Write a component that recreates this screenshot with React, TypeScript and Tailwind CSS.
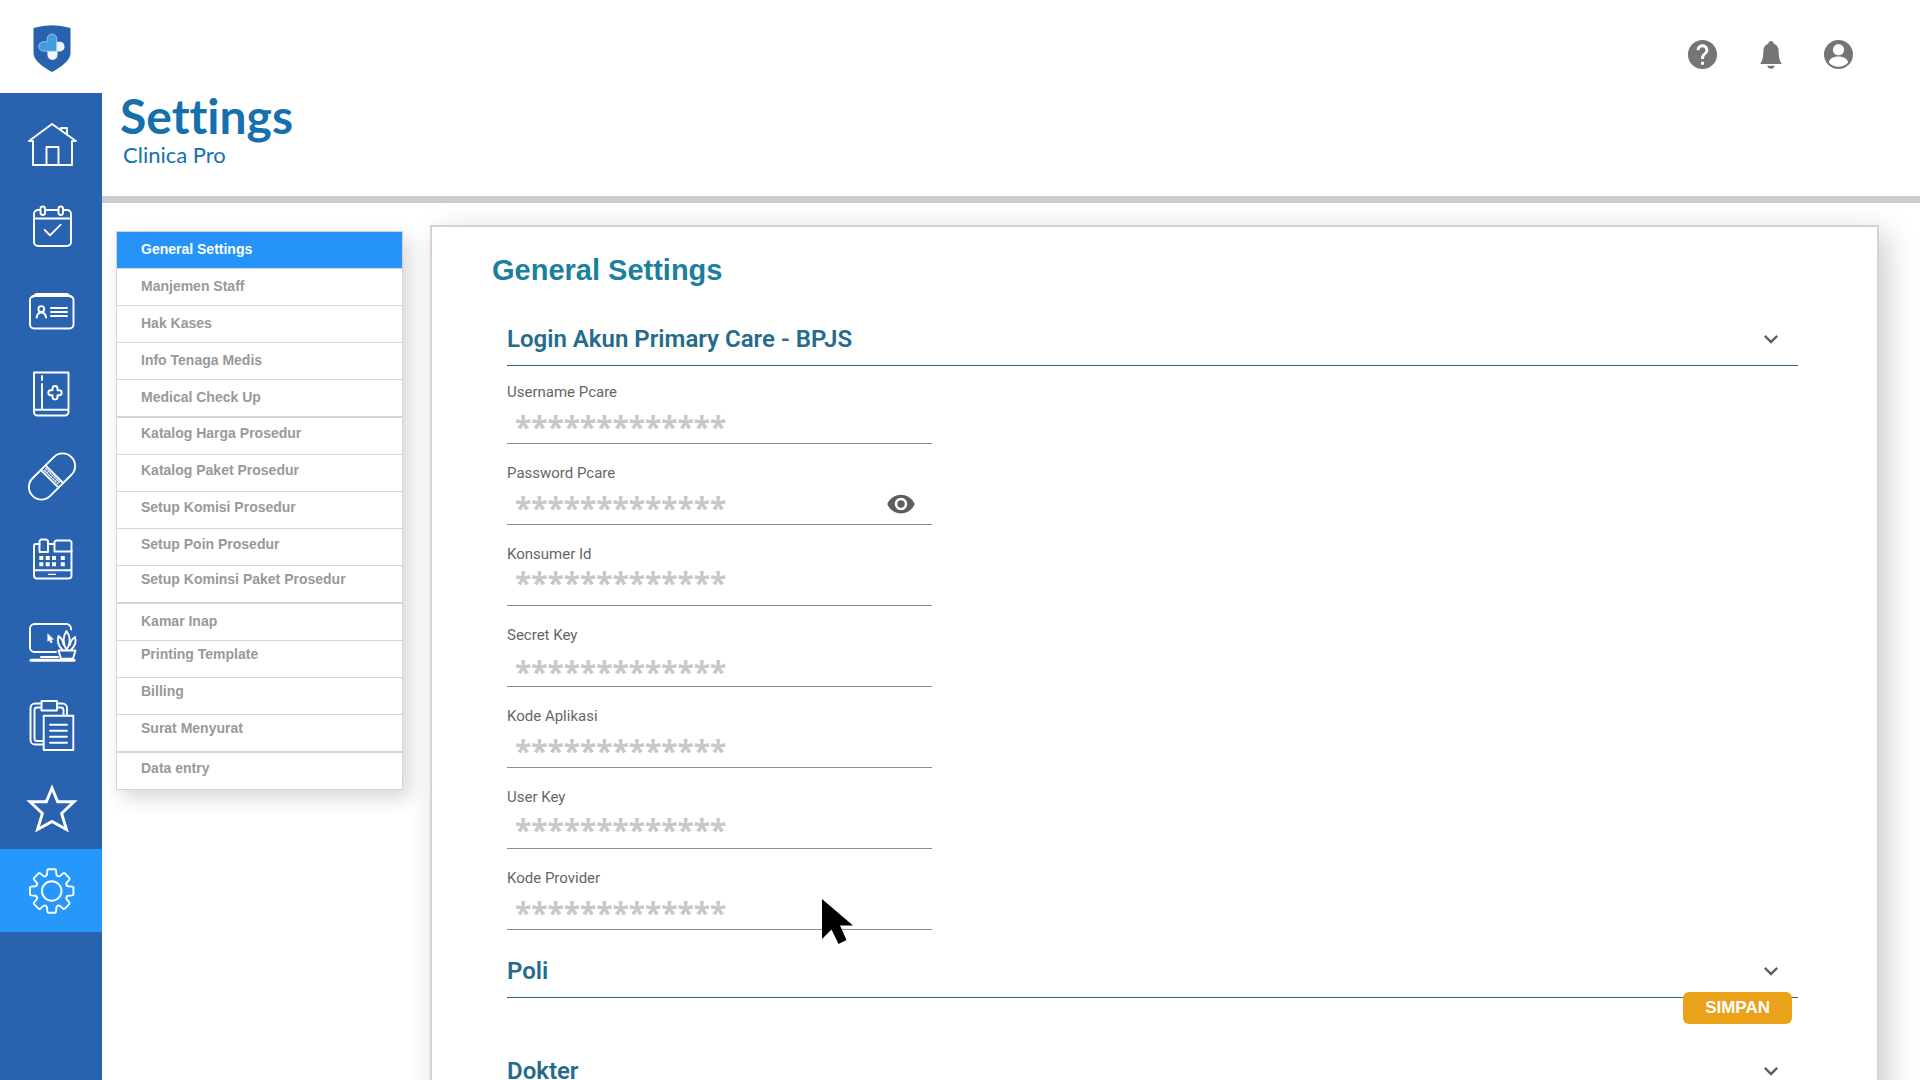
import type { ReactNode } from 'react';
import { MdHelp, MdKeyboardArrowDown, MdVisibility } from 'react-icons/md';

function gearPath(cx: number, cy: number, outer: number, root: number) {
  const point = (r: number, deg: number) => {
    const a = (deg * Math.PI) / 180;
    return `${(cx + r * Math.cos(a)).toFixed(2)} ${(cy + r * Math.sin(a)).toFixed(2)}`;
  };
  let d = '';
  for (let i = 0; i < 8; i++) {
    const c = i * 45;
    d += `${i === 0 ? 'M' : 'L'}${point(root, c - 16)}L${point(outer - 1, c - 12)}Q${point(outer, c - 11)} ${point(outer, c - 9)}L${point(outer, c + 9)}Q${point(outer, c + 11)} ${point(outer - 1, c + 12)}L${point(root, c + 16)}Q${point(root - 2, c + 22.5)} ${point(root, c + 29)}`;
  }
  return d + 'Z';
}

const navItems: { label: string; active?: boolean; icon: ReactNode }[] = [
  {
    label: 'Beranda',
    icon: (
      <>
        <path d="M12 63V39H8L31 22l24 17h-4v24Z" />
        <path d="M40 28v-2h6v6M25.500 63V45h12v18" />
      </>
    ),
  },
  {
    label: 'Jadwal',
    icon: (
      <>
        <path d="M19 25h-2a4 4 0 0 0-4 4v28a4 4 0 0 0 4 4h29a4 4 0 0 0 4-4V29a4 4 0 0 0-4-4h-3M25 25h12M13 33.500h37" />
        <rect x="19.500" y="21.500" width="4.500" height="8.500" rx="2.200" />
        <rect x="37.500" y="21.500" width="4.500" height="8.500" rx="2.200" />
        <path d="M23.700 45l5.300 5.300 10.700-10.600" />
      </>
    ),
  },
  {
    label: 'Pasien',
    icon: (
      <>
        <rect x="9" y="28" width="43.500" height="32.500" rx="4" />
        <path d="M11.500 29l3.500-3h31.500l3.500 3" />
        <circle cx="20.300" cy="41" r="2.900" />
        <path d="M15.700 49.500c.5-3.500 2.200-5 4.600-5s4.200 1.500 4.800 5" strokeWidth="2" />
        <path d="M30 40h16M30 44h16M30 48h16" />
      </>
    ),
  },
  {
    label: 'Rekam medis',
    icon: (
      <>
        <path d="M13 21.500h34.500V61a3.500 3.500 0 0 1-3.500 3.500H16.500A3.500 3.500 0 0 1 13 61ZM13 58.700h34.500M21 25v4M21 33v25" />
        <path d="M31.500 39.200v-1.700a2.500 2.500 0 0 1 5 0v1.700h1.700a2.500 2.500 0 0 1 0 5h-1.700v1.700a2.500 2.500 0 0 1-5 0v-1.700h-1.700a2.500 2.500 0 0 1 0-5Z" />
      </>
    ),
  },
  {
    label: 'Obat',
    icon: (
      <g transform="translate(31 42.500) rotate(-45)">
        <rect x="-27.500" y="-12.500" width="55" height="25" rx="12.500" />
        <path d="M-3.300-12.500v25M3.300-12.500v25" />
        <path d="M-1-10v21M1.200-10v21" strokeWidth="1.300" strokeDasharray="1.500 1.500" />
      </g>
    ),
  },
  {
    label: 'Kasir',
    icon: (
      <>
        <path d="M18.500 27H15a2 2 0 0 0-2 2v29.500a3 3 0 0 0 3 3h31.500a3 3 0 0 0 3-3V34M27 27h6M13 53.300h37.500" />
        <path d="M18.500 35V24l1.500-1.500h5.500L27 24v11ZM33.500 34.500V25l1.500-1.500h14l1.500 1.500v9.500Z" />
        <path d="M27.500 57.300h7" strokeWidth="1.300" />
        <path d="M18.300 41h4M24.700 41h4M31 41h4M39.800 41h4M18.300 47.200h4M24.700 47.200h4M31 47.200h4M39.800 47.200h4" strokeWidth="4" strokeLinecap="butt" />
      </>
    ),
  },
  {
    label: 'Ruang kerja',
    icon: (
      <>
        <path d="M50 29.500v-1a4.500 4.500 0 0 0-4.500-4.500h-32A4.500 4.500 0 0 0 9 28.500v19a4.500 4.500 0 0 0 4.500 4.500H35M20 57h17" />
        <path d="M10 60.300h43" strokeWidth="3" />
        <path d="M26.700 34v7.500l1.800-1.500 1.300 3 1.500-.7-1.300-2.800 2.300-.3Z" fill="currentColor" strokeWidth=".5" />
        <path d="M37.500 50.500h17l-2.500 8.300H40Z" />
        <path d="M41.500 50c-4-4-5.500-9-4-14 3 2 4.500 5 5.200 9M50 50c4-4 5.500-9 4-13-3 2-4.500 4.500-5.200 8M45.500 50c-4-7-4-13 0-19 4.500 6 4.500 12 0 19Z" />
      </>
    ),
  },
  {
    label: 'Laporan',
    icon: (
      <>
        <path d="M20.500 20.500H14A4.500 4.500 0 0 0 9.500 25v32a4.500 4.500 0 0 0 4.500 4.500h8.500M20.500 24.500H16a2.500 2.500 0 0 0-2.500 2.500v28.500A2.500 2.500 0 0 0 16 58h6.500M36 20.500h5.500A4.500 4.500 0 0 1 46 25v7.500M36 24.500h4a2.500 2.500 0 0 1 2.500 2.500v5.500" />
        <path d="M20.500 18h15.500v9.500H20.500ZM22.700 32.700h29.600V67H22.700Z" />
        <path d="M29 41.700h17M29 47.700h17M29 53.700h17M29 59.700h17" />
      </>
    ),
  },
  {
    label: 'Favorit',
    icon: (
      <path
        d="M31 22L36.700 35.800H53L40.600 47.500 45.500 63.500 31 55.500 16.500 63.500 21.400 47.500 9 35.800H25.300Z"
        strokeWidth="2.900"
        strokeLinejoin="miter"
      />
    ),
  },
  {
    label: 'Pengaturan',
    active: true,
    icon: (
      <>
        <path d={gearPath(30.7, 42, 22, 17)} />
        <circle cx="30.700" cy="42" r="9.800" />
      </>
    ),
  },
];

const menuItems: { label: string; style: string }[] = [
  { label: 'General Settings', style: 'min-h-[37px] border-b pb-0.5 bg-[#2693f8] text-white' },
  { label: 'Manjemen Staff', style: 'min-h-[37px] border-b pb-0.5' },
  { label: 'Hak Kases', style: 'min-h-[37px] border-b pb-0.5' },
  { label: 'Info Tenaga Medis', style: 'min-h-[37px] border-b pb-0.5' },
  { label: 'Medical Check Up', style: 'min-h-[38px] border-b-2 pb-0.5' },
  { label: 'Katalog Harga Prosedur', style: 'min-h-[37px] border-b pb-1.5' },
  { label: 'Katalog Paket Prosedur', style: 'min-h-[37px] border-b pb-1.5' },
  { label: 'Setup Komisi Prosedur', style: 'min-h-[37px] border-b pb-1.5' },
  { label: 'Setup Poin Prosedur', style: 'min-h-[37px] border-b pb-1.5' },
  { label: 'Setup Kominsi Paket Prosedur', style: 'min-h-[38px] border-b-2 pb-2.5' },
  { label: 'Kamar Inap', style: 'min-h-[37px] border-b pb-0.5' },
  { label: 'Printing Template', style: 'min-h-[37px] border-b pb-2.5' },
  { label: 'Billing', style: 'min-h-[37px] border-b pb-2.5' },
  { label: 'Surat Menyurat', style: 'min-h-[38px] border-b-2 pb-2.5' },
  { label: 'Data entry', style: 'min-h-[36px] pb-1.5' },
];

const fields = [
  { id: 'username', label: 'Username Pcare', pad: 'pt-2' },
  { id: 'password', label: 'Password Pcare', pad: 'pt-2', reveal: true },
  { id: 'konsumer', label: 'Konsumer Id', pad: 'pb-1' },
  { id: 'secret', label: 'Secret Key', pad: 'pt-3' },
  { id: 'aplikasi', label: 'Kode Aplikasi', pad: 'pt-2' },
  { id: 'userkey', label: 'User Key', pad: 'pt-1' },
  { id: 'provider', label: 'Kode Provider', pad: 'pt-2' },
];

function SectionHeader({ title }: { title: string }) {
  return (
    <h3 className="border-b border-[#236a80]">
      <button type="button" className="flex w-full items-center justify-between pr-[13px] pb-2.5 text-left font-['Roboto',sans-serif] text-2xl font-semibold text-[#256c8c]">
        {title}
        <MdKeyboardArrowDown className="size-7 text-[#606060]" />
      </button>
    </h3>
  );
}

function Logo() {
  return (
    <svg viewBox="0 0 38 47" className="h-[47px] w-[38px]" role="img" aria-label="Clinica Pro">
      <path d="M.5 3Q19-2.500 37.500 3v25Q37.500 37 19 47 .5 37 .5 28Z" fill="#2862ae" />
      <path d="M14 19h10.500v11a5 5 0 0 1-10 0Z" fill="#f1f5fb" />
      <path d="M23.500 16.700h3.800a4.900 4.900 0 0 1 0 9.700h-3.800Z" fill="#f1f5fb" />
      <path d="M14.300 16.700v-3a4.700 4.700 0 0 1 9.400 0v12.500H10.500a4.700 4.700 0 0 1 0-9.500Z" fill="#429bdb" stroke="#a5d8f6" strokeWidth=".8" />
    </svg>
  );
}

export default function App() {
  return (
    <div className="flex h-screen overflow-hidden bg-white font-['Liberation_Sans',Arial,sans-serif]">
      <aside className="flex w-[102px] shrink-0 flex-col">
        <div className="flex h-[93px] shrink-0 items-center justify-center pt-1 pl-0.5">
          <Logo />
        </div>
        <nav aria-label="Utama" className="flex-1 bg-[#2962ae] pt-[9px]">
          {navItems.map((item) => (
            <a
              key={item.label}
              href="#"
              aria-label={item.label}
              className={item.active ? 'flex h-[83px] justify-center bg-[#2697fb] text-white' : 'flex h-[83px] justify-center text-white'}
            >
              <svg
                viewBox="0 0 60 83"
                className="h-[83px] w-[60px]"
                fill="none"
                stroke="currentColor"
                strokeWidth="1.900"
                strokeLinecap="round"
                strokeLinejoin="round"
              >
                {item.icon}
              </svg>
            </a>
          ))}
        </nav>
      </aside>

      <div className="flex min-w-0 flex-1 flex-col">
        <header className="flex h-[203px] shrink-0 items-start justify-between border-b-[7px] border-[#cbcbcb] pr-[64px] pl-[18px]">
          <div className="pt-[88px] font-['Lato',sans-serif] text-[#1670ae] [font-variant-ligatures:none]">
            <h1 className="text-5xl leading-[56px] font-bold">Settings</h1>
            <p className="pl-[3px] text-[22px] leading-[22px]">Clinica Pro</p>
          </div>
          <div className="flex items-center gap-[33px] pt-[37px] text-[#757575]">
            <button type="button" aria-label="Bantuan">
              <MdHelp className="size-[35px]" />
            </button>
            <button type="button" aria-label="Notifikasi" className="flex w-[35px] justify-center">
              <svg viewBox="0 0 22 28" className="h-7 w-[22px]" fill="currentColor">
                <path d="M11 0c1.500 0 2.500 1 2.700 2.400 3.300 1.200 5 4 5 7.800 0 6 .8 9 3.100 12.800H.2C2.500 19.200 3.300 16.200 3.300 10.200c0-3.800 1.700-6.600 5-7.800C8.500 1 9.500 0 11 0ZM7.300 24.700h7.400c-.3 2-1.800 3-3.700 3s-3.400-1-3.700-3Z" />
              </svg>
            </button>
            <button type="button" aria-label="Akun" className="flex w-[35px] justify-center">
              <svg viewBox="0 0 29 29" className="size-[29px]">
                <circle cx="14.500" cy="14.500" r="14.500" fill="currentColor" />
                <circle cx="14.500" cy="9.700" r="5.600" fill="#fff" />
                <path d="M4.800 22.500c.8-4 5-6 9.700-6s8.900 2 9.700 6a13 13 0 0 1-19.400 0Z" fill="#fff" />
              </svg>
            </button>
          </div>
        </header>

        <main className="flex min-h-0 flex-1 items-start pr-[41px] pl-[14px]">
          <nav aria-label="Settings" className="mt-7 w-[287px] shrink-0 border border-[#d4d4d4] bg-white shadow-[6px_8px_18px_rgba(0,0,0,0.16)]">
            <ul>
              {menuItems.map((item) => (
                <li key={item.label}>
                  <a
                    href="#"
                    className={`flex items-center border-[#d6d6d6] pl-6 text-sm leading-5 font-bold ${item.label === 'General Settings' ? '' : 'text-[#999]'} ${item.style}`}
                  >
                    {item.label}
                  </a>
                </li>
              ))}
            </ul>
          </nav>

          <section className="relative mt-[22px] ml-[27px] min-w-0 flex-1 border-2 border-[#d3d3d3] bg-white pt-[27px] pr-[79px] pb-12 pl-[60px] shadow-[8px_8px_28px_rgba(0,0,0,0.2)]">
            <h2 className="text-[29px] leading-8 font-bold text-[#1b7f9d]">General Settings</h2>
            <form className="ml-[15px] pt-[37px]" onSubmit={(e) => e.preventDefault()}>
              <SectionHeader title="Login Akun Primary Care - BPJS" />
              <div className="flex w-[425px] flex-col pt-4 pb-1.5">
                {fields.map((f) => (
                  <div key={f.id} className="flex h-[81px] flex-col">
                    <label htmlFor={f.id} className="font-['Roboto',sans-serif] text-[15px] leading-5 text-[#666]">
                      {f.label}
                    </label>
                    <div className="flex h-[42px] items-center border-b border-[#8c8c8c] pr-4 pl-2">
                      <input
                        id={f.id}
                        type="text"
                        defaultValue="*************"
                        className={`h-full min-w-0 flex-1 bg-transparent font-['Noto_Sans',sans-serif] text-[30px] font-bold text-[#c8c8c8] outline-none ${f.pad}`}
                      />
                      {f.reveal && (
                        <button type="button" aria-label="Tampilkan password">
                          <MdVisibility className="size-[30px] text-[#5e5e5e]" />
                        </button>
                      )}
                    </div>
                  </div>
                ))}
              </div>
              <div className="relative">
                <SectionHeader title="Poli" />
                <button type="submit" className="absolute top-[37px] right-[6px] h-8 rounded-md bg-[#eba21b] px-[22px] text-[17px] font-bold text-white">
                  SIMPAN
                </button>
              </div>
              <div className="pt-[57px]">
                <SectionHeader title="Dokter" />
              </div>
            </form>
          </section>
        </main>
      </div>

      <svg viewBox="0 0 31 45" className="pointer-events-none fixed top-[899px] left-[822px] h-[45px] w-[31px]">
        <path d="M0 0 31 26.500H18L24.500 41 16.500 45 9.500 30.500 0 40Z" />
      </svg>
    </div>
  );
}
